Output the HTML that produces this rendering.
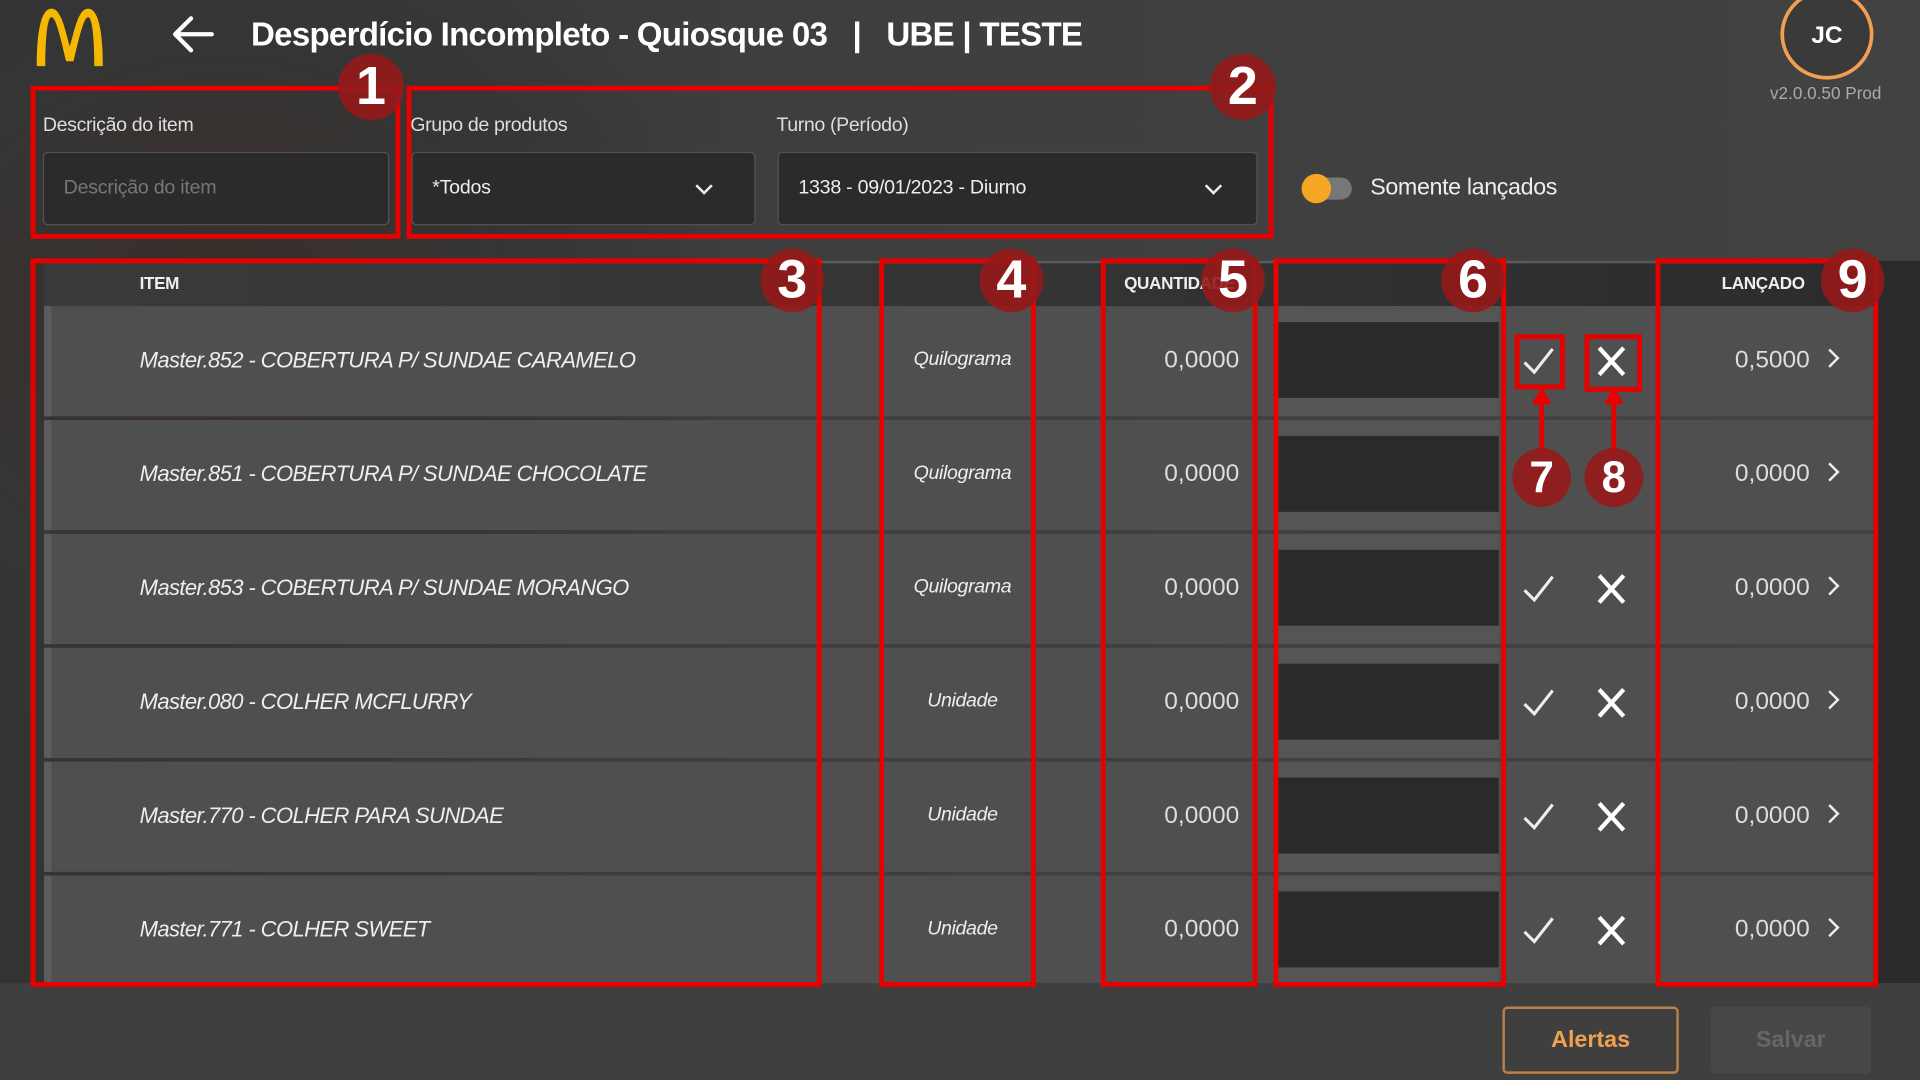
<!DOCTYPE html>
<html><head><meta charset="utf-8"><style>
*{margin:0;padding:0;box-sizing:border-box}
html,body{width:1920px;height:1080px;overflow:hidden;background:#3c3c3c}
#s{position:absolute;left:0;top:0;width:1568px;height:882px;transform:scale(1.2244898);transform-origin:0 0;font-family:"Liberation Sans",sans-serif;color:#eee;
background:radial-gradient(ellipse 420px 380px at 180px 260px,#3a2e28 0%,#353535 60%,rgba(0,0,0,0) 100%),linear-gradient(90deg,#333 0%,#3e3e3e 40%,#424242 100%)}
.a{position:absolute}
.lbl{font-size:16px;color:#ddd;top:94px;letter-spacing:-0.3px}
.inp{top:124px;height:60px;background:#2b2b2b;border:1px solid #555;border-radius:4px;font-size:16px;line-height:58px;padding-left:16px;color:#eee;letter-spacing:-0.2px}
.chev{position:absolute;top:22px;width:10px;height:10px;border-right:2px solid #eee;border-bottom:2px solid #eee;transform:rotate(45deg)}
.rb{position:absolute;border:4px solid #e60000}
.bd{position:absolute;border-radius:50%;background:rgba(150,25,25,.9);color:#fff;font-weight:bold;text-align:center;font-size:44px}
.row{position:absolute;left:36px;width:1494px;height:90px;background:#4f4f4f;border-left:6px solid #5c5c5c}
.it{position:absolute;left:72px;top:34px;font-style:italic;font-size:18px;letter-spacing:-0.5px;color:#eee}
.un{position:absolute;left:699px;top:35px;font-style:italic;font-size:16px;letter-spacing:-0.3px;width:90px;text-align:center}
.q{position:absolute;right:518px;top:33px;font-size:20px;color:#ddd}
.box{position:absolute;left:1002px;top:0;width:180px;height:90px;background:#555}
.box i{position:absolute;left:0;top:13px;width:180px;height:62px;background:#2a2a2a}
.ck{position:absolute;left:1199px;top:30px}
.x{position:absolute;left:1259px;top:30px}
.lv{position:absolute;right:52px;top:33px;font-size:20px;color:#ddd}
.gt{position:absolute;right:30px;top:37px;width:11px;height:11px;border-right:2.5px solid #eee;border-top:2.5px solid #eee;transform:rotate(45deg)}
.hd{position:absolute;top:223px;font-size:14px;font-weight:bold;color:#eee;letter-spacing:-0.3px}
</style></head><body><div id="s">
<div class="a" style="left:1530px;top:213px;width:38px;height:590px;background:#2a2a2a"></div>
<svg class="a" style="left:26px;top:4px" width="62" height="52" viewBox="0 0 62 52"><path d="M4 50 C4 20 8 3 16 3 C24 3 27 20 31 34 C35 20 38 3 46 3 C54 3 58 20 58 50 L51 50 C51 25 49 10 46 10 C42 10 38 30 34 46 L28 46 C24 30 20 10 16 10 C13 10 11 25 11 50 Z" fill="#f5b800"/></svg>
<svg class="a" style="left:139px;top:12px" width="38" height="32" viewBox="0 0 38 32"><path d="M34 16 H5 M17 3 L4 16 L17 29" stroke="#fff" stroke-width="3.5" fill="none" stroke-linecap="round" stroke-linejoin="round"/></svg>
<div class="a" style="left:205px;top:13px;font-size:27px;letter-spacing:-0.6px;font-weight:bold;color:#fff;white-space:pre">Desperdício Incompleto - Quiosque 03   |   UBE | TESTE</div>
<div class="a" style="left:1454px;top:-9px;width:76px;height:74px;border-radius:50%;border:3px solid #f0a050;background:#3a3a3a;text-align:center;line-height:70px;font-size:20px;font-weight:bold;color:#fff">JC</div>
<div class="a" style="left:1430px;top:68px;width:122px;text-align:center;font-size:14px;color:#aaa">v2.0.0.50 Prod</div>
<div class="a lbl" style="left:35px">Descrição do item</div>
<div class="a lbl" style="left:335px">Grupo de produtos</div>
<div class="a lbl" style="left:634px">Turno (Período)</div>
<div class="a inp" style="left:35px;width:283px;color:#777">Descrição do item</div>
<div class="a inp" style="left:336px;width:281px">*Todos<span class="chev" style="left:233px"></span></div>
<div class="a inp" style="left:635px;width:392px">1338 - 09/01/2023 - Diurno<span class="chev" style="left:350px"></span></div>
<div class="a" style="left:1064px;top:145px;width:40px;height:18px;border-radius:9px;background:#777"></div>
<div class="a" style="left:1063px;top:142px;width:24px;height:24px;border-radius:50%;background:#f5a623"></div>
<div class="a" style="left:1119px;top:143px;font-size:19px;color:#eee;letter-spacing:-0.3px">Somente lançados</div>
<div class="a" style="left:36px;top:213px;width:1494px;height:37px;background:linear-gradient(90deg,#3a3a3a,#333 60%,#2c2c2c);border-top:2px solid #5a5a5a"></div>
<div class="hd" style="left:114px">ITEM</div>
<div class="hd" style="left:918px">QUANTIDADE</div>
<div class="hd" style="left:1406px">LANÇADO</div>
<div class="row" style="top:250px"><div class="it">Master.852 - COBERTURA P/ SUNDAE CARAMELO</div><div class="un">Quilograma</div><div class="q">0,0000</div><div class="box"><i></i></div><svg class="ck" width="30" height="30"><path d="M4 16 L12 24 L27 5" stroke="#eee" stroke-width="2.5" fill="none"/></svg><svg class="x" width="30" height="30"><path d="M5 4 L25 26 M25 4 L5 26" stroke="#fff" stroke-width="3.5"/></svg><div class="lv">0,5000</div><div class="gt"></div></div>
<div class="row" style="top:343px"><div class="it">Master.851 - COBERTURA P/ SUNDAE CHOCOLATE</div><div class="un">Quilograma</div><div class="q">0,0000</div><div class="box"><i></i></div><div class="lv">0,0000</div><div class="gt"></div></div>
<div class="row" style="top:436px"><div class="it">Master.853 - COBERTURA P/ SUNDAE MORANGO</div><div class="un">Quilograma</div><div class="q">0,0000</div><div class="box"><i></i></div><svg class="ck" width="30" height="30"><path d="M4 16 L12 24 L27 5" stroke="#eee" stroke-width="2.5" fill="none"/></svg><svg class="x" width="30" height="30"><path d="M5 4 L25 26 M25 4 L5 26" stroke="#fff" stroke-width="3.5"/></svg><div class="lv">0,0000</div><div class="gt"></div></div>
<div class="row" style="top:529px"><div class="it">Master.080 - COLHER MCFLURRY</div><div class="un">Unidade</div><div class="q">0,0000</div><div class="box"><i></i></div><svg class="ck" width="30" height="30"><path d="M4 16 L12 24 L27 5" stroke="#eee" stroke-width="2.5" fill="none"/></svg><svg class="x" width="30" height="30"><path d="M5 4 L25 26 M25 4 L5 26" stroke="#fff" stroke-width="3.5"/></svg><div class="lv">0,0000</div><div class="gt"></div></div>
<div class="row" style="top:622px"><div class="it">Master.770 - COLHER PARA SUNDAE</div><div class="un">Unidade</div><div class="q">0,0000</div><div class="box"><i></i></div><svg class="ck" width="30" height="30"><path d="M4 16 L12 24 L27 5" stroke="#eee" stroke-width="2.5" fill="none"/></svg><svg class="x" width="30" height="30"><path d="M5 4 L25 26 M25 4 L5 26" stroke="#fff" stroke-width="3.5"/></svg><div class="lv">0,0000</div><div class="gt"></div></div>
<div class="row" style="top:715px;height:88px"><div class="it">Master.771 - COLHER SWEET</div><div class="un">Unidade</div><div class="q">0,0000</div><div class="box" style="height:88px"><i></i></div><svg class="ck" width="30" height="30"><path d="M4 16 L12 24 L27 5" stroke="#eee" stroke-width="2.5" fill="none"/></svg><svg class="x" width="30" height="30"><path d="M5 4 L25 26 M25 4 L5 26" stroke="#fff" stroke-width="3.5"/></svg><div class="lv">0,0000</div><div class="gt"></div></div>
<div class="a" style="left:0;top:803px;width:1568px;height:79px;background:#3f3f3f"></div>
<div class="a" style="left:1227px;top:822px;width:144px;height:55px;border:2px solid #b9804a;border-radius:4px;text-align:center;line-height:51px;font-size:19px;font-weight:bold;color:#f0a050">Alertas</div>
<div class="a" style="left:1397px;top:822px;width:131px;height:55px;background:#474747;border-radius:4px;text-align:center;line-height:55px;font-size:19px;font-weight:bold;color:#666">Salvar</div>
<div class="rb" style="left:25px;top:70px;width:302px;height:125px"></div>
<div class="rb" style="left:332px;top:70px;width:708px;height:125px"></div>
<div class="rb" style="left:25px;top:211px;width:646px;height:595px"></div>
<div class="rb" style="left:718px;top:211px;width:128px;height:595px"></div>
<div class="rb" style="left:899px;top:211px;width:128px;height:595px"></div>
<div class="rb" style="left:1040px;top:211px;width:190px;height:595px"></div>
<div class="rb" style="left:1352px;top:211px;width:182px;height:595px"></div>
<div class="rb" style="left:1237px;top:273px;width:41px;height:45px"></div>
<div class="rb" style="left:1294px;top:273px;width:47px;height:47px"></div>
<svg class="a" style="left:1240px;top:316px" width="100" height="60"><path d="M19 4 V56 M13 14 L19 4 L25 14 M78 4 V56 M72 14 L78 4 L84 14" stroke="#e60000" stroke-width="4" fill="#e60000"/></svg>
<div class="bd" style="left:276px;top:44px;width:54px;height:54px;line-height:54px">1</div>
<div class="bd" style="left:988px;top:44px;width:54px;height:54px;line-height:54px">2</div>
<div class="bd" style="left:621px;top:203px;width:52px;height:52px;line-height:52px">3</div>
<div class="bd" style="left:800px;top:203px;width:52px;height:52px;line-height:52px">4</div>
<div class="bd" style="left:981px;top:203px;width:52px;height:52px;line-height:52px">5</div>
<div class="bd" style="left:1177px;top:203px;width:52px;height:52px;line-height:52px">6</div>
<div class="bd" style="left:1487px;top:203px;width:52px;height:52px;line-height:52px">9</div>
<div class="bd" style="left:1235px;top:366px;width:48px;height:48px;line-height:48px;font-size:36px">7</div>
<div class="bd" style="left:1294px;top:366px;width:48px;height:48px;line-height:48px;font-size:36px">8</div>
</div></body></html>
